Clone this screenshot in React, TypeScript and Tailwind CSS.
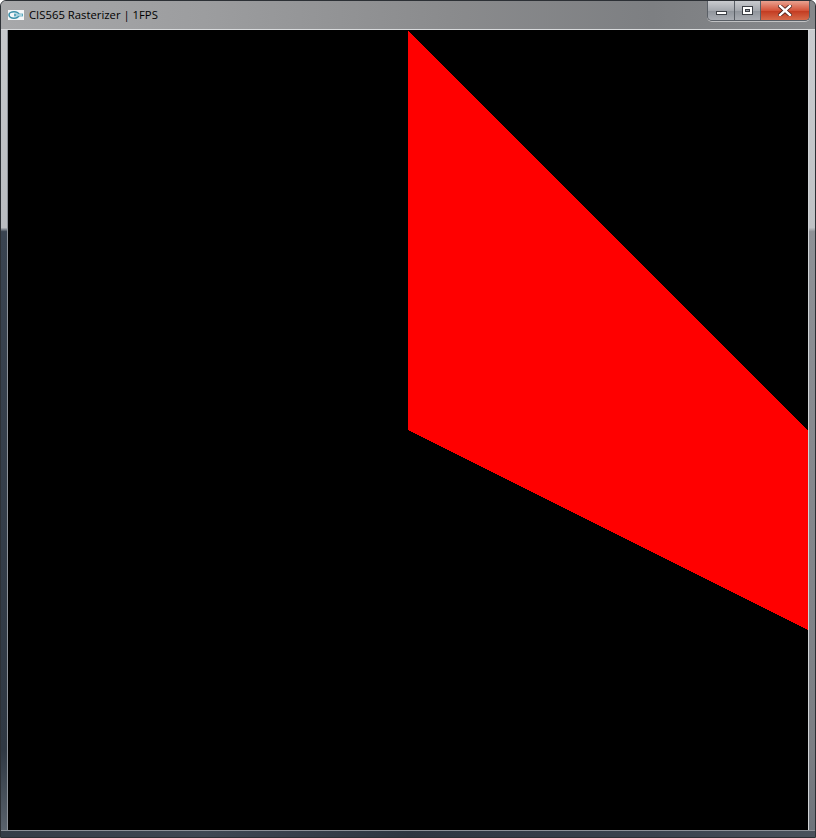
import React from 'react';

/* Win7-style window chrome around an 800x800 canvas */

function AppIcon() {
  return (
    <svg width="16" height="10" viewBox="0 0 16 10" className="shrink-0">
      <rect x="0" y="0" width="16" height="10" fill="#f4f6f8" />
      <ellipse cx="6" cy="5" rx="5" ry="3.2" fill="none" stroke="#3a8fa8" strokeWidth="1.6" />
      <rect x="6" y="3.6" width="9" height="2.8" fill="#5aa7be" />
      <rect x="8" y="4.4" width="6" height="1.2" fill="#d8ecf2" />
    </svg>
  );
}

function CaptionButtons() {
  return (
    <div className="flex h-[20px] rounded-b-[5px] border border-t-0 border-[#5a5f66] overflow-hidden shadow-[0_1px_0_rgba(255,255,255,0.5)]">
      <div className="w-[27px] flex items-center justify-center bg-[linear-gradient(#c9cbcf,#a4a8ae_50%,#8e939a_51%,#a9adb3)] border-r border-[#5a5f66]">
        <div className="w-[11px] h-[4px] mt-[5px] bg-white border border-[#3b3f45]" />
      </div>
      <div className="w-[26px] flex items-center justify-center bg-[linear-gradient(#c9cbcf,#a4a8ae_50%,#8e939a_51%,#a9adb3)] border-r border-[#5a5f66]">
        <div className="w-[11px] h-[9px] bg-white border border-[#3b3f45] flex items-center justify-center">
          <div className="w-[5px] h-[3px] border border-[#3b3f45] bg-[#9aa0a8]" />
        </div>
      </div>
      <div className="w-[48px] flex items-center justify-center bg-[linear-gradient(#e9a290,#d4543a_50%,#c2391f_51%,#d66a4a)]">
        <svg width="14" height="11" viewBox="0 0 14 11">
          <path d="M2 1 L12 10 M12 1 L2 10" stroke="#4a1f18" strokeWidth="4" strokeLinecap="square" />
          <path d="M2 1 L12 10 M12 1 L2 10" stroke="#ffffff" strokeWidth="2.4" strokeLinecap="square" />
        </svg>
      </div>
    </div>
  );
}

export default function App() {
  return (
    <div
      className="w-[816px] h-[838px] flex flex-col overflow-hidden border border-[#2c3035] rounded-t-[6px] bg-[linear-gradient(90deg,#9a9c9f,#8d8f92_40%,#7c7e81_70%,#8a8c8f)]"
      style={{ fontFamily: '"Segoe UI", "Open Sans", "Liberation Sans", sans-serif' }}
    >
      {/* Title bar */}
      <div className="h-[29px] shrink-0 flex items-start border-b border-[#d8dadc] bg-[linear-gradient(90deg,#a7a8aa,#9c9d9f_25%,#8a8b8d_55%,#7d7f82_80%,#86888b)]">
        <div className="flex items-center gap-[5px] pl-[7px] pt-[7px]">
          <AppIcon />
          <span className="text-[11.3px] leading-[14px] text-black">CIS565 Rasterizer | 1FPS</span>
        </div>
        <div className="ml-auto mr-[5px]">
          <CaptionButtons />
        </div>
      </div>

      {/* Body: side frames + canvas */}
      <div className="flex flex-1">
        <div className="w-[7px] bg-[linear-gradient(#c6c9cc,#b9bcc0_24.7%,#394350_25.2%,#2f3843_90%,#59626c)] border-r border-[#8c9198]" />
        <div className="w-[800px] h-[800px] bg-black">
          <svg width="800" height="800" viewBox="0 0 800 800" shapeRendering="crispEdges">
            <polygon points="400,1 800,400 800,600 400,400" fill="#ff0000" />
          </svg>
        </div>
        <div className="w-[7px] bg-[linear-gradient(#c9cbce,#bfc2c5_24.7%,#8e9196_25.2%,#7b7e83_90%,#6e747b)] border-l border-[#d0d3d6]" />
      </div>

      {/* Bottom frame */}
      <div className="h-[7px] shrink-0 border-t border-[#8c9198] bg-[linear-gradient(90deg,#353d47,#3f4853_25%,#2e3641_50%,#3a434e_80%,#4a525c)]" />
    </div>
  );
}
